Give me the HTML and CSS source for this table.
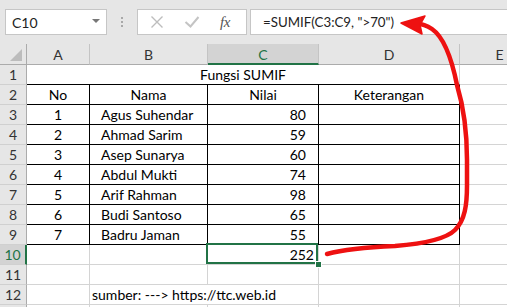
FILE: index.html
```html
<!DOCTYPE html>
<html>
<head>
<meta charset="utf-8">
<link rel="stylesheet" href="styles.css">
</head>
<body>
<div class="app">
  <div class="fbar">
    <div class="namebox"><span>C10</span><svg class="caret" width="8" height="5" viewBox="0 0 8 5"><path d="M0 0H8L4 4Z" fill="#777"/></svg></div>
    <div class="grip"><i></i><i></i><i></i></div>
    <div class="fxbtns">
      <svg class="ic" width="14" height="14" viewBox="0 0 14 14"><path d="M1.5 1.5L12.5 12.5M12.5 1.5L1.5 12.5" stroke="#bdbdbd" stroke-width="1.4"/></svg>
      <svg class="ic" width="16" height="14" viewBox="0 0 16 14"><path d="M1.5 7L6.5 11.5L14.5 2" stroke="#c4c4c4" stroke-width="2" fill="none"/></svg>
      <span class="fx">fx</span>
    </div>
    <div class="finput">=SUMIF(C3:C9, "&gt;70")</div>
  </div>

  <div class="sheet">
    <div class="hd corner"><span class="tri"></span></div>
    <div class="hd col">A</div>
    <div class="hd col">B</div>
    <div class="hd col sel">C</div>
    <div class="hd col">D</div>
    <div class="hd col">E</div>

    <div class="hd row">1</div>
    <div class="c span4 ctr bb">Fungsi SUMIF</div>
    <div class="c"></div>

    <div class="hd row">2</div>
    <div class="c bk ctr">No</div>
    <div class="c bk ctr">Nama</div>
    <div class="c bk ctr">Nilai</div>
    <div class="c bk ctr">Keterangan</div>
    <div class="c"></div>

    <div class="hd row">3</div>
    <div class="c bk ctr">1</div>
    <div class="c bk name">Agus Suhendar</div>
    <div class="c bk num">80</div>
    <div class="c bk"></div>
    <div class="c"></div>

    <div class="hd row">4</div>
    <div class="c bk ctr">2</div>
    <div class="c bk name">Ahmad Sarim</div>
    <div class="c bk num">59</div>
    <div class="c bk"></div>
    <div class="c"></div>

    <div class="hd row">5</div>
    <div class="c bk ctr">3</div>
    <div class="c bk name">Asep Sunarya</div>
    <div class="c bk num">60</div>
    <div class="c bk"></div>
    <div class="c"></div>

    <div class="hd row">6</div>
    <div class="c bk ctr">4</div>
    <div class="c bk name">Abdul Mukti</div>
    <div class="c bk num">74</div>
    <div class="c bk"></div>
    <div class="c"></div>

    <div class="hd row">7</div>
    <div class="c bk ctr">5</div>
    <div class="c bk name">Arif Rahman</div>
    <div class="c bk num">98</div>
    <div class="c bk"></div>
    <div class="c"></div>

    <div class="hd row">8</div>
    <div class="c bk ctr">6</div>
    <div class="c bk name">Budi Santoso</div>
    <div class="c bk num">65</div>
    <div class="c bk"></div>
    <div class="c"></div>

    <div class="hd row">9</div>
    <div class="c bk ctr">7</div>
    <div class="c bk name">Badru Jaman</div>
    <div class="c bk num">55</div>
    <div class="c bk"></div>
    <div class="c"></div>

    <div class="hd row sel">10</div>
    <div class="c"></div>
    <div class="c"></div>
    <div class="c active">252</div>
    <div class="c"></div>
    <div class="c"></div>

    <div class="hd row">11</div>
    <div class="c"></div>
    <div class="c"></div>
    <div class="c"></div>
    <div class="c"></div>
    <div class="c"></div>

    <div class="hd row">12</div>
    <div class="c"></div>
    <div class="c span2 src">sumber: ---&gt; https://ttc.web.id</div>
    <div class="c"></div>
    <div class="c"></div>

    <div class="hd row"></div>
    <div class="c"></div>
    <div class="c"></div>
    <div class="c"></div>
    <div class="c"></div>
    <div class="c"></div>
  </div>

  <svg class="arrow" width="507" height="307" viewBox="0 0 507 307">
    <path d="M327 254 C345 249 370 247 395 246 C420 244 445 240 455 230 C465 220 467 205 467 185 L467 160 C467 130 463 105 457 85 C452 60 445 38 432 29 C425 24 418 23 412 24" fill="none" stroke="#ee1111" stroke-width="4.5" stroke-linecap="round" stroke-linejoin="round"/>
    <path d="M401 23 L425 16 L420 25 L422 34 Z" fill="#ee1111" stroke="#ee1111" stroke-width="1.5" stroke-linejoin="round"/>
  </svg>
</div>
</body>
</html>
```

FILE: styles.css
```css
* {
  box-sizing: border-box;
  margin: 0;
  padding: 0;
}

body {
  margin: 0;
  background: #ffffff;
  font-family: Lato, "Liberation Sans", sans-serif;
  font-size: 14px;
  color: #000;
}

.app {
  position: relative;
  width: 507px;
  height: 307px;
  overflow: hidden;
}

/* formula bar */
.fbar {
  height: 44px;
  background: #e6e6e6;
  display: flex;
  align-items: flex-start;
  padding-top: 9px;
}

.namebox {
  margin-left: 5px;
  width: 102px;
  height: 26px;
  background: #fff;
  border: 1px solid #c6c6c6;
  display: flex;
  align-items: center;
  justify-content: space-between;
  padding: 0 6px 0 6px;
  color: #222;
  font-size: 14px;
}

.caret {
  display: block;
  margin-top: -2px;
}

.grip {
  width: 30px;
  height: 26px;
  display: flex;
  flex-direction: column;
  align-items: center;
  justify-content: center;
  gap: 2px;
}

.grip i {
  display: block;
  width: 2px;
  height: 2px;
  background: #a8a8a8;
}

.fxbtns {
  width: 110px;
  height: 26px;
  background: #fff;
  border: 1px solid #c6c6c6;
  display: flex;
  align-items: center;
  padding-left: 12px;
}

.fxbtns .ic {
  display: block;
}

.fxbtns .ic + .ic {
  margin-left: 20px;
}

.fx {
  margin-left: 20px;
  font-family: "Liberation Serif", serif;
  font-style: italic;
  font-size: 15px;
  color: #555;
  letter-spacing: -0.5px;
}

.finput {
  flex: 1;
  margin-left: 3px;
  height: 26px;
  background: #fff;
  border: 1px solid #c6c6c6;
  border-right: none;
  padding-left: 12px;
  line-height: 24px;
  color: #222;
  font-size: 13.3px;
}

/* sheet */
.sheet {
  width: 540px;
  display: grid;
  grid-template-columns: 27px 63px 118px 111px 141px 1fr;
  grid-template-rows: 21px repeat(13, 20px);
}

.hd {
  background: #e6e6e6;
  color: #333;
  display: flex;
  align-items: center;
  justify-content: center;
  line-height: 19px;
}

.hd.col {
  border-right: 1px solid #c4c4c4;
  border-bottom: 1px solid #ababab;
  padding-top: 1px;
}

.hd.row {
  border-right: 1px solid #ababab;
  border-bottom: 1px solid #d0d0d0;
}

.hd.corner {
  border-right: 1px solid #ababab;
  border-bottom: 1px solid #ababab;
  position: relative;
}

.tri {
  position: absolute;
  right: 4px;
  bottom: 3px;
  width: 12px;
  height: 12px;
  background: #bcbcbc;
  clip-path: polygon(100% 0, 100% 100%, 0 100%);
}

.hd.col.sel {
  background: #d3d3d3;
  color: #217346;
  border-bottom: 2px solid #217346;
}

.hd.row.sel {
  background: #d3d3d3;
  color: #217346;
  border-right: 2px solid #217346;
}

.c {
  border-right: 1px solid #d4d4d4;
  border-bottom: 1px solid #d4d4d4;
  line-height: 19px;
  white-space: nowrap;
  overflow: visible;
}

.c.bk {
  border-right-color: #000;
  border-bottom-color: #000;
}

.c.bb {
  border-bottom-color: #000;
}

.span4 {
  grid-column: span 4;
}

.span2 {
  grid-column: span 2;
}

.ctr {
  text-align: center;
}

.name {
  padding-left: 11px;
}

.num {
  text-align: right;
  padding-right: 12px;
}

.active {
  position: relative;
  text-align: right;
  padding-right: 4px;
}

.active::after {
  content: "";
  position: absolute;
  left: -2px;
  top: -2px;
  right: 0;
  bottom: 0;
  border: 2px solid #217346;
}

.active::before {
  content: "";
  position: absolute;
  right: -3px;
  bottom: -3px;
  width: 5px;
  height: 5px;
  background: #217346;
  outline: 1px solid #fff;
  z-index: 1;
}

.src {
  padding-left: 2px;
}

.arrow {
  position: absolute;
  left: 0;
  top: 0;
  pointer-events: none;
}
```
